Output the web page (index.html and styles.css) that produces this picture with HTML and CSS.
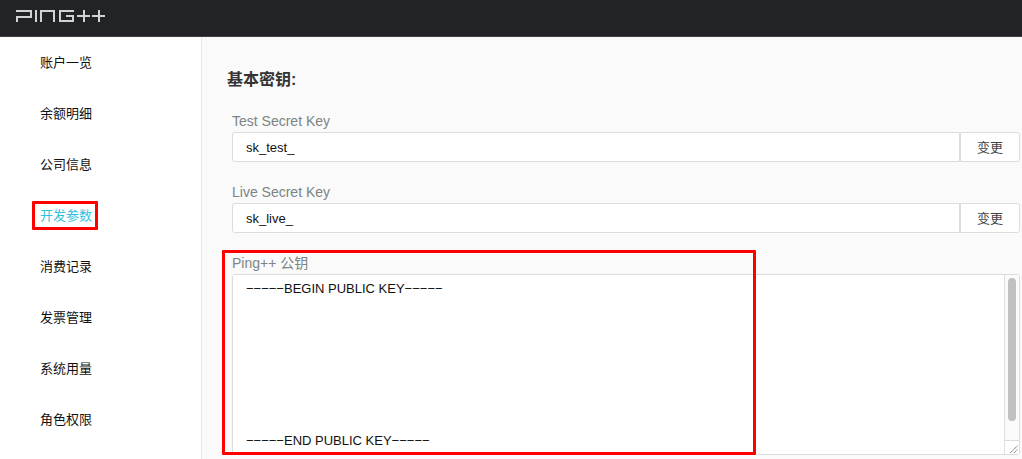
FILE: index.html
```html
<!DOCTYPE html>
<html lang="zh-CN">
<head>
<meta charset="utf-8">
<title>Ping++ 开发参数</title>
<link rel="stylesheet" href="styles.css">
</head>
<body>
<header class="topbar">
  <a class="logo" href="#" aria-label="Ping++">
    <svg width="92" height="14" viewBox="0 0 92 14" fill="none" stroke="#d2d2d5" stroke-width="2">
      <path d="M1 2H16V8H2V13M21 1V13M26 13V2H39V13M59 2H45V12H58V7H51"/>
      <path d="M62 7H75M69 1V13M77 7H90M84 1V13"/>
    </svg>
  </a>
</header>
<div class="layout">
  <nav class="sidebar">
    <a class="item" href="#">账户一览</a>
    <a class="item" href="#">余额明细</a>
    <a class="item" href="#">公司信息</a>
    <a class="item active" href="#" aria-current="page">开发参数</a>
    <a class="item" href="#">消费记录</a>
    <a class="item" href="#">发票管理</a>
    <a class="item" href="#">系统用量</a>
    <a class="item" href="#">角色权限</a>
  </nav>
  <main class="content">
    <h1 class="title">基本密钥:</h1>
    <div class="field">
      <label class="label" for="test-key">Test Secret Key</label>
      <div class="group">
        <input class="input" id="test-key" type="text" value="sk_test_">
        <button class="change" type="button">变更</button>
      </div>
    </div>
    <div class="field">
      <label class="label" for="live-key">Live Secret Key</label>
      <div class="group">
        <input class="input" id="live-key" type="text" value="sk_live_">
        <button class="change" type="button">变更</button>
      </div>
    </div>
    <div class="field highlighted">
      <label class="label" for="public-key">Ping++ 公钥</label>
      <div class="box">
        <textarea class="textarea" id="public-key" spellcheck="false">−−−−−BEGIN PUBLIC KEY−−−−−







−−−−−END PUBLIC KEY−−−−−
</textarea>
        <div class="scrollbar" aria-hidden="true">
          <div class="track"><div class="thumb"></div></div>
          <svg class="grip" width="14" height="14" viewBox="0 0 14 14" stroke="#555" stroke-dasharray="1.400 0.600"><path d="M5 13L13 5M9 13L13 9"/></svg>
        </div>
      </div>
    </div>
  </main>
</div>
</body>
</html>
```
FILE: styles.css
```css
*,
*::after {
  box-sizing: border-box;
}

body {
  margin: 0;
  min-height: 100vh;
  display: flex;
  flex-direction: column;
  background: #fafafa;
  color: #111;
  font: 13px/19px "Liberation Sans", "Noto Sans CJK SC", sans-serif;
}

.topbar {
  display: flex;
  height: 37px;
  padding: 9px 15px;
  background: #222327;
  border-bottom: 1px solid #3d3f44;
}

.logo {
  display: block;
  height: 14px;
}

.logo svg {
  display: block;
}

.layout {
  flex: 1;
  display: flex;
}

.sidebar {
  flex: none;
  width: 202px;
  display: flex;
  flex-direction: column;
  background: #fff;
  border-right: 1px solid #e6e6e6;
}

.item {
  position: relative;
  height: 51px;
  padding-left: 40px;
  line-height: 51px;
  color: #111;
  text-decoration: none;
}

.item.active {
  color: #35bfe0;
}

.item.active::after {
  content: "";
  position: absolute;
  left: 32px;
  top: 11px;
  width: 66px;
  height: 29px;
  border: 3px solid #f00;
  border-radius: 1px;
}

.content {
  flex: 1;
  min-width: 0;
  padding: 31px 2px 4px 30px;
}

.title {
  margin: 0 0 17px -5px;
  font-size: 16px;
  line-height: 24px;
  font-weight: bold;
  color: #333;
}

.field {
  position: relative;
}

.field + .field {
  margin-top: 18px;
}

.label {
  display: block;
  height: 23px;
  font-size: 14px;
  line-height: 24px;
  color: #7b8585;
}

.group {
  display: flex;
  height: 30px;
}

.input {
  flex: 1;
  min-width: 0;
  padding: 0 13px;
  border: 1px solid #dcdcdc;
  border-radius: 3px 0 0 3px;
  background: #fff;
  color: #111;
  font: inherit;
}

.change {
  width: 60px;
  padding: 0;
  border: 1px solid #dcdcdc;
  border-radius: 0 3px 3px 0;
  background: #fff;
  color: #444;
  font: inherit;
}

.box {
  position: relative;
}

.textarea {
  display: block;
  width: 100%;
  height: 181px;
  padding: 4px 28px 4px 13px;
  border: 1px solid #dcdcdc;
  border-radius: 3px;
  background: #fff;
  color: #111;
  font: inherit;
  resize: none;
  scrollbar-width: none;
}

.scrollbar {
  position: absolute;
  top: 1px;
  right: 1px;
  bottom: 1px;
  width: 15px;
  display: flex;
  flex-direction: column;
  background: #fafafa;
  border-left: 1px solid #dfdfdf;
  pointer-events: none;
}

.track {
  flex: 1;
  padding: 3px;
}

.thumb {
  width: 8px;
  height: 90%;
  border-radius: 4px;
  background: #c1c1c1;
}

.grip {
  display: block;
  background: #fff;
  border-top: 1px solid #dcdcdc;
}

.highlighted::after {
  content: "";
  position: absolute;
  left: -10px;
  top: -1px;
  width: 534px;
  bottom: 0;
  border: 3px solid #f00;
  border-radius: 1px;
  pointer-events: none;
}
```
